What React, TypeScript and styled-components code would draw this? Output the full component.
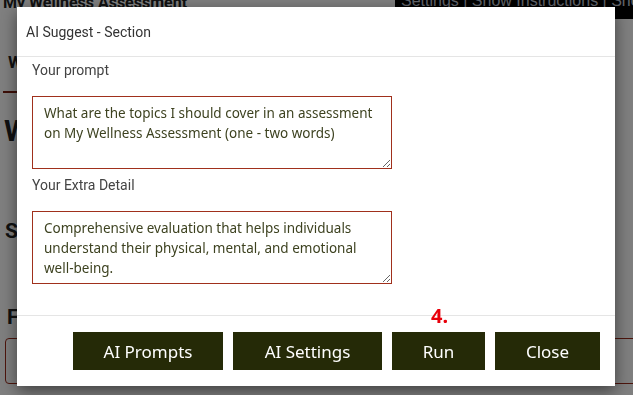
import React from 'react';
import styled, { createGlobalStyle } from 'styled-components';

const GlobalStyle = createGlobalStyle`
  html, body {
    margin: 0;
    padding: 0;
    background: #ffffff;
    overflow: hidden;
    font-family: 'Roboto', 'Liberation Sans', sans-serif;
  }
  * {
    box-sizing: border-box;
  }
`;

const Page = styled.div`
  width: 633px;
  height: 395px;
  color: #333;
  overflow: hidden;
`;

const TopRow = styled.div`
  display: flex;
  justify-content: space-between;
  align-items: flex-start;
  height: 40px;
`;

const SiteTitle = styled.div`
  font-weight: bold;
  font-size: 16px;
  line-height: 20px;
  margin: -7px 0 0 3px;
  color: #222;
`;

const TopLinks = styled.div`
  width: 238px;
  height: 19px;
  background: #000;
  color: #c4cad8;
  font-family: 'Liberation Sans', Arial, sans-serif;
  font-size: 16px;
  line-height: 16px;
  white-space: nowrap;
  overflow: hidden;
  padding: 0 0 0 6px;

  span {
    display: block;
    margin-top: -7px;
  }
`;

const Tabs = styled.div`
  display: flex;
  height: 53px;
  padding-left: 3px;
`;

const Tab = styled.div<{ $active?: boolean }>`
  font-weight: bold;
  font-size: 17px;
  padding: 12px 5px 0;
  color: #222;
  border-bottom: 2px solid ${(p) => (p.$active ? '#7a1d10' : 'transparent')};
`;

const Heading = styled.h1`
  margin: 20px 0 0 4px;
  font-size: 30px;
  line-height: 36px;
  font-weight: bold;
  color: #222;
`;

const SectionTitle = styled.h2`
  margin: 69px 0 0 5px;
  font-size: 21px;
  line-height: 26px;
  font-weight: bold;
  color: #222;
`;

const FieldTitle = styled.h3`
  margin: 60px 0 0 7px;
  font-size: 21px;
  line-height: 26px;
  font-weight: bold;
  color: #222;
`;

const FieldBox = styled.div`
  margin: 8px -20px 0 5px;
  height: 46px;
  border: 1px solid #9b2a1a;
  border-radius: 4px;
`;

const Overlay = styled.div`
  position: fixed;
  inset: 0;
  background: rgba(0, 0, 0, 0.5);
  display: flex;
  align-items: flex-start;
`;

const Modal = styled.div`
  position: relative;
  margin: 7px 0 0 17px;
  width: 598px;
  height: 379px;
  background: #fff;
  box-shadow: 0 5px 15px rgba(0, 0, 0, 0.5);
  display: flex;
  flex-direction: column;
`;

const ModalHeader = styled.div`
  height: 50px;
  padding: 0 9px;
  display: flex;
  align-items: center;
  border-bottom: 1px solid #e5e5e5;
  font-size: 14px;
  color: #333;
`;

const ModalBody = styled.div`
  flex: 1;
  padding: 3px 15px 0;
  display: flex;
  flex-direction: column;
`;

const Label = styled.label`
  font-size: 14px;
  line-height: 20px;
  color: #444;
  margin-bottom: 16px;
`;

const TextArea = styled.textarea`
  width: 360px;
  height: 73px;
  margin: 0 0 6px;
  padding: 6px 11px 5px;
  border: 1px solid #a0301c;
  border-radius: 0;
  font-family: 'Noto Sans', 'DejaVu Sans', sans-serif;
  font-size: 13.5px;
  line-height: 20px;
  color: #3d4220;
  resize: vertical;
  outline: none;
  background: #fff;
`;

const ModalFooter = styled.div`
  height: 71px;
  border-top: 1px solid #e5e5e5;
  padding: 16px 15px 0;
  display: flex;
  justify-content: flex-end;
  align-items: flex-start;
  gap: 10px;
`;

const Button = styled.button<{ $width: number }>`
  width: ${(p) => p.$width}px;
  height: 38px;
  border: none;
  border-radius: 0;
  background: #252a07;
  color: #fff;
  font-family: 'Noto Sans', 'DejaVu Sans', sans-serif;
  font-size: 17px;
  cursor: pointer;
`;

const StepMarker = styled.span`
  position: absolute;
  left: 414px;
  top: 296px;
  color: #e8000b;
  font-family: 'Noto Sans', 'DejaVu Sans', sans-serif;
  font-weight: bold;
  font-size: 20px;
  line-height: 26px;
`;

export default function App() {
  return (
    <>
      <GlobalStyle />
      <Page>
        <TopRow>
          <SiteTitle>My Wellness Assessment</SiteTitle>
          <TopLinks>
            <span>Settings | Show Instructions | Show r</span>
          </TopLinks>
        </TopRow>
        <Tabs>
          <Tab $active>Welcome</Tab>
        </Tabs>
        <Heading>Wellness</Heading>
        <SectionTitle>Sections</SectionTitle>
        <FieldTitle>Focus</FieldTitle>
        <FieldBox />
      </Page>
      <Overlay>
        <Modal>
          <ModalHeader>AI Suggest - Section</ModalHeader>
          <ModalBody>
            <Label>Your prompt</Label>
            <TextArea
              defaultValue="What are the topics I should cover in an assessment on My Wellness Assessment (one - two words)"
            />
            <Label>Your Extra Detail</Label>
            <TextArea
              defaultValue="Comprehensive evaluation that helps individuals understand their physical, mental, and emotional well-being."
            />
          </ModalBody>
          <ModalFooter>
            <Button $width={150}>AI Prompts</Button>
            <Button $width={149}>AI Settings</Button>
            <Button $width={93}>Run</Button>
            <Button $width={105}>Close</Button>
          </ModalFooter>
          <StepMarker>4.</StepMarker>
        </Modal>
      </Overlay>
    </>
  );
}
